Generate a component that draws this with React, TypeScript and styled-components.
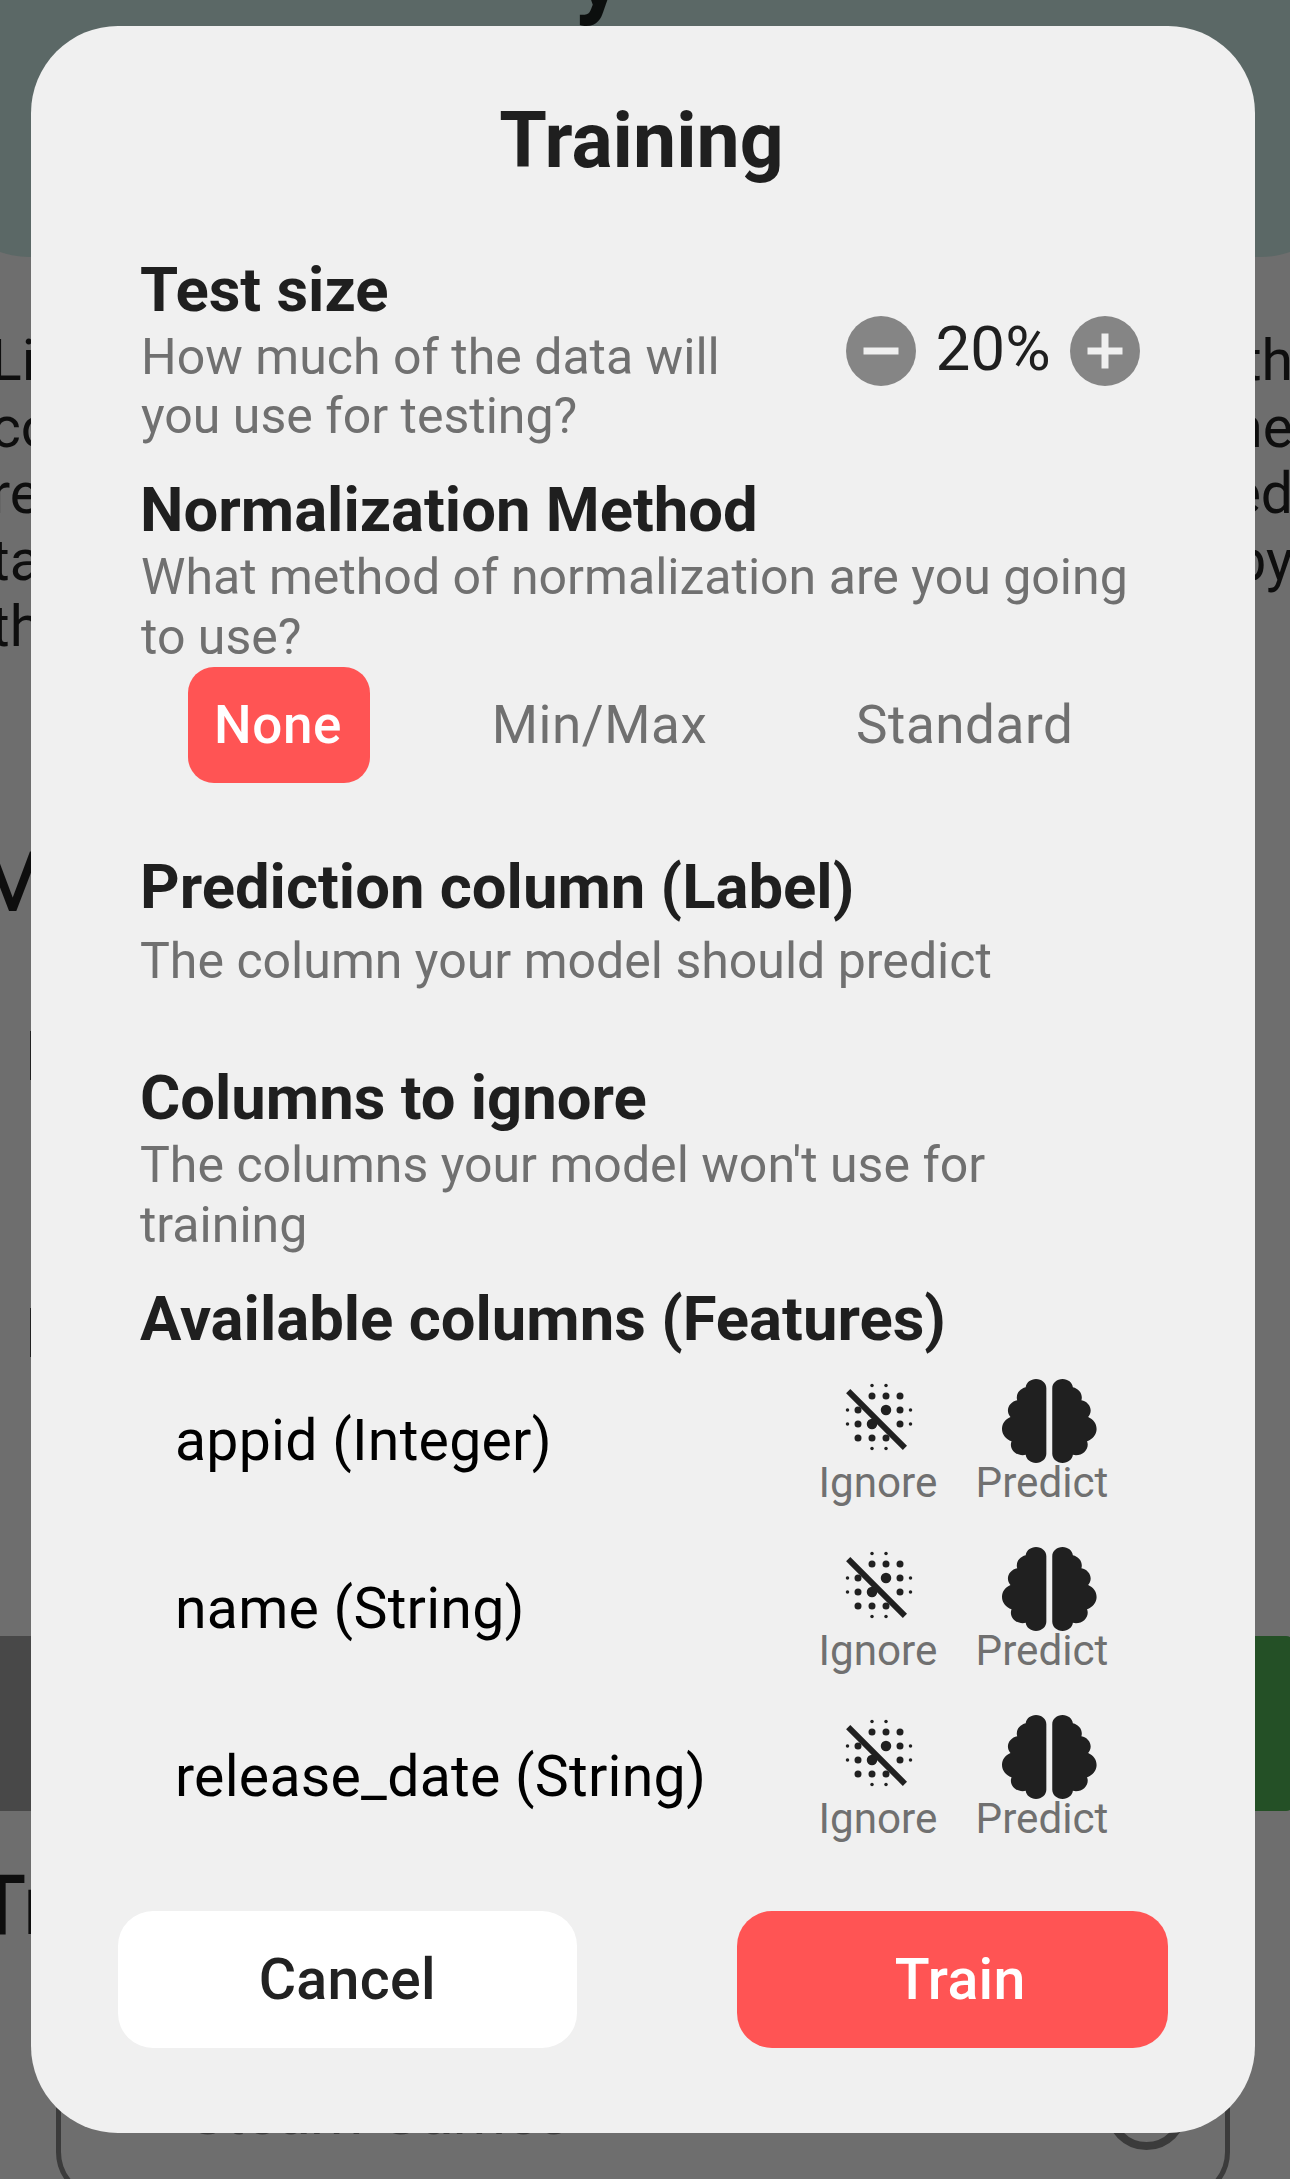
import React from "react";
import styled, { createGlobalStyle } from "styled-components";

const GlobalStyle = createGlobalStyle`
  * { box-sizing: border-box; }
  body { margin: 0; background: #6e6e6e; font-family: Roboto, "Liberation Sans", sans-serif; }
`;

const Screen = styled.main`
  position: relative;
  width: 1290px;
  height: 2179px;
  overflow: hidden;
  background: #6e6e6e;
`;

/* Dimmed page behind the dialog */
const Backdrop = styled.div`
  display: flex;
  flex-direction: column;
  height: 100%;
  overflow: hidden;
  color: #0e0e0e;
`;

const Banner = styled.header`
  flex: none;
  height: 257px;
  margin: 0 -58px;
  border-radius: 0 0 87px 87px;
  background: #5b6866;
  overflow: hidden;
`;

const BannerTitle = styled.div`
  margin: -87px 0 0 632px;
  font-size: 100px;
  line-height: 115px;
  font-weight: 700;
  color: #0c0f0e;
`;

const Intro = styled.div`
  flex: none;
  margin: 71.3px 0 0 -9px;
  width: 1302px;
`;

const IntroLine = styled.div`
  display: flex;
  justify-content: space-between;
  height: 66.5px;
  font-size: 57px;
  line-height: 66.5px;
`;

const SideHeading = styled.div<{ $top: number; $left: number }>`
  flex: none;
  height: 98px;
  margin: ${(p) => p.$top}px 0 0 ${(p) => p.$left}px;
  font-size: 84px;
  line-height: 98px;
  font-weight: 500;
`;

const Stem = styled.div<{ $top: number }>`
  flex: none;
  width: 4px;
  height: 49px;
  margin: ${(p) => p.$top}px 0 0 30px;
  background: #222;
`;

const Strip = styled.div`
  flex: none;
  display: flex;
  justify-content: space-between;
  height: 175px;
  margin: 279px -5px 0 0;
`;

const StripEnd = styled.div<{ $color: string }>`
  width: 400px;
  border-radius: 0 9px 9px 0;
  background: ${(p) => p.$color};
`;

const Field = styled.div`
  flex: none;
  display: flex;
  justify-content: space-between;
  width: 1174px;
  height: 180px;
  margin: 65.4px 0 0 56px;
  padding: 52px 38px 0 128px;
  border: 5px solid #3b3b3b;
  border-radius: 48px;
  color: #3b3b3b;
  font-size: 60.7px;
  line-height: 74px;
`;

const Ring = styled.div`
  width: 81px;
  height: 81px;
  border: 8px solid #3b3b3b;
  border-radius: 50%;
  margin-top: -8px;
`;

/* Dialog */
const Dialog = styled.section`
  position: absolute;
  top: 26px;
  left: 31px;
  display: flex;
  flex-direction: column;
  width: 1224px;
  height: 2107.3px;
  padding: 69px 87px 0 87px;
  border-radius: 87px;
  background: #f0f0f0;
  color: #1f1f1f;
`;

const Title = styled.h1`
  margin: 0 3px 66px 0;
  font-size: 77px;
  line-height: 92px;
  font-weight: 700;
  text-align: center;
`;

const Section = styled.div<{ $gap: number }>`
  flex: none;
  margin: 0 0 ${(p) => p.$gap}px 22px;
`;

const SplitSection = styled(Section)`
  display: flex;
  align-items: flex-start;
`;

const SectionText = styled.div`
  width: 699px;
`;

const Heading = styled.h2`
  margin: 0;
  font-size: 61.6px;
  line-height: 74px;
  font-weight: 700;
  white-space: nowrap;
`;

const Description = styled.p<{ $top?: number; $inset?: number }>`
  margin: ${(p) => p.$top ?? 1}px 0 -1px ${(p) => p.$inset ?? 0}px;
  font-size: 50.05px;
  line-height: 59.6px;
  color: #707070;
  white-space: nowrap;
`;

const Stepper = styled.div`
  display: flex;
  align-items: center;
  margin-top: 56px;
  height: 84px;
`;

const StepButton = styled.button`
  display: flex;
  width: 84px;
  height: 84px;
  padding: 0;
  border: 0;
  background: none;
  color: #858585;
`;

const StepValue = styled.span`
  width: 140px;
  padding-bottom: 4px;
  text-align: center;
  font-size: 62px;
  line-height: 74px;
`;

const Options = styled.div`
  flex: none;
  display: flex;
  margin: 1px 0 67px 70px;
`;

const Option = styled.button<{ $active?: boolean; $width: number; $left: number }>`
  width: ${(p) => p.$width}px;
  height: 115.4px;
  margin: 0 0 0 ${(p) => p.$left}px;
  padding: 0 ${(p) => (p.$active ? 2 : 0)}px 0 0;
  border: 0;
  border-radius: 26px;
  background: ${(p) => (p.$active ? "#ff5454" : "transparent")};
  color: ${(p) => (p.$active ? "#fff" : "#707070")};
  font-family: inherit;
  font-size: 53px;
  line-height: 62px;
  letter-spacing: 0.55px;
  font-weight: ${(p) => (p.$active ? 500 : 400)};
  white-space: nowrap;
`;

const FeatureRow = styled.div`
  flex: none;
  display: flex;
  align-items: center;
  height: 168px;
  padding-left: 57px;
`;

const FeatureName = styled.span`
  width: 634px;
  font-size: 57.2px;
  line-height: 66px;
  letter-spacing: 0.25px;
  color: #000;
  white-space: nowrap;
`;

const Action = styled.button<{ $width: number }>`
  display: flex;
  flex-direction: column;
  align-items: center;
  width: ${(p) => p.$width}px;
  padding: 0;
  border: 0;
  background: none;
  color: #202020;
  font-family: inherit;
`;

const ActionLabel = styled.span`
  font-size: 42.2px;
  line-height: 49px;
  color: #707070;
`;

const BlurOffSvg = styled.svg`
  display: block;
  width: 84px;
  height: 84px;
  margin: 1px 0 -1px 2px;
`;

const BrainSvg = styled.svg`
  display: block;
  width: 94.6px;
  height: 84px;
  margin: 5px 0 -5px 15px;
`;

const Footer = styled.div`
  flex: none;
  display: flex;
  justify-content: space-between;
  margin-top: 50.6px;
`;

const FooterButton = styled.button<{ $primary?: boolean }>`
  width: ${(p) => (p.$primary ? 430.7 : 458.5)}px;
  height: 136.8px;
  padding: 0 0 0 ${(p) => (p.$primary ? 15 : 0)}px;
  border: 0;
  border-radius: 35px;
  background: ${(p) => (p.$primary ? "#ff5454" : "#fff")};
  color: ${(p) => (p.$primary ? "#fff" : "#222")};
  font-family: inherit;
  font-size: 57.3px;
  line-height: 66px;
  letter-spacing: 0.3px;
  font-weight: 500;
`;

const StepIcon = ({ plus }: { plus?: boolean }) => (
  <svg width="84" height="84" viewBox="0 0 24 24">
    <circle cx="12" cy="12" r="10" fill="currentColor" />
    <path d={plus ? "M7 11h4V7h2v4h4v2h-4v4h-2v-4H7z" : "M7 11h10v2H7z"} fill="#f0f0f0" />
  </svg>
);

const DOTS: [number, number, number][] = [
  [10, 3, 0.5], [14, 3, 0.5],
  [10, 6, 1], [14, 6, 1], [18, 6, 1],
  [3, 10, 0.5], [6, 10, 1], [14, 10, 1.5], [18, 10, 1], [21, 10, 0.5],
  [3, 14, 0.5], [6, 14, 1], [10, 14, 1.5], [18, 14, 1], [21, 14, 0.5],
  [6, 18, 1], [10, 18, 1], [14, 18, 1],
  [10, 21, 0.5], [14, 21, 0.5],
];

const BlurOffIcon = () => (
  <BlurOffSvg viewBox="0 0 24 24" fill="currentColor">
    {DOTS.map(([x, y, r]) => (
      <circle key={`${x}-${y}`} cx={x} cy={y} r={r} />
    ))}
    <path d="M3.8 4 2.6 5.2 18.8 21.4 20 20.2z" />
  </BlurOffSvg>
);

const BrainIcon = () => (
  <BrainSvg viewBox="0 0 512 512" preserveAspectRatio="none" fill="currentColor">
    <path d="M184 0c30.900 0 56 25.100 56 56V456c0 30.900-25.100 56-56 56c-28.900 0-52.700-21.900-55.700-50.100c-5.200 1.400-10.700 2.100-16.300 2.100c-35.300 0-64-28.700-64-64c0-7.400 1.300-14.600 3.600-21.200C21.400 367.400 0 338.200 0 304c0-31.900 18.700-59.500 45.800-72.300C37.100 220.800 32 207 32 192c0-30.700 21.600-56.300 50.400-62.600C80.800 123.900 80 118 80 112c0-29.900 20.600-55.100 48.300-62.100C131.300 21.900 155.100 0 184 0zM328 0c28.900 0 52.600 21.900 55.700 49.900c27.800 7 48.300 32.100 48.300 62.100c0 6-.8 11.900-2.400 17.400c28.800 6.200 50.400 31.900 50.400 62.600c0 15-5.100 28.800-13.800 39.700C493.300 244.500 512 272.100 512 304c0 34.200-21.400 63.400-51.600 74.800c2.300 6.600 3.600 13.800 3.600 21.200c0 35.300-28.700 64-64 64c-5.600 0-11.100-.7-16.300-2.100c-3 28.200-26.800 50.100-55.700 50.100c-30.900 0-56-25.100-56-56V56c0-30.900 25.100-56 56-56z" />
  </BrainSvg>
);

const INTRO = [["Li", "th"], ["co", "ne"], ["re", "ed"], ["ta", "by"], ["th", ""]];
const FEATURES = ["appid (Integer)", "name (String)", "release_date (String)"];

export default function App() {
  return (
    <Screen>
      <GlobalStyle />
      <Backdrop>
        <Banner>
          <BannerTitle>y</BannerTitle>
        </Banner>
        <Intro>
          {INTRO.map(([start, end]) => (
            <IntroLine key={start}>
              <span>{start}</span>
              <span>{end}</span>
            </IntroLine>
          ))}
        </Intro>
        <SideHeading $top={173.5} $left={-24}>M</SideHeading>
        <Stem $top={98.7} />
        <Stem $top={228} />
        <Strip>
          <StripEnd $color="#484848" />
          <StripEnd $color="#245026" />
        </Strip>
        <SideHeading $top={45.6} $left={-25}>Tr</SideHeading>
        <Field>
          Steam Games
          <Ring />
        </Field>
      </Backdrop>

      <Dialog>
        <Title>Training</Title>
        <SplitSection $gap={27.5}>
          <SectionText>
            <Heading>Test size</Heading>
            <Description $top={0.5} $inset={1}>
              How much of the data will
              <br />
              you use for testing?
            </Description>
          </SectionText>
          <Stepper>
            <StepButton><StepIcon /></StepButton>
            <StepValue>20%</StepValue>
            <StepButton><StepIcon plus /></StepButton>
          </Stepper>
        </SplitSection>
        <Section $gap={0}>
          <Heading>Normalization Method</Heading>
          <Description $inset={1}>
            What method of normalization are you going
            <br />
            to use?
          </Description>
        </Section>
        <Options>
          <Option $active $width={182} $left={0}>None</Option>
          <Option $width={270} $left={94.5}>Min/Max</Option>
          <Option $width={270} $left={95.2}>Standard</Option>
        </Options>
        <Section $gap={71}>
          <Heading>Prediction column (Label)</Heading>
          <Description $top={8}>The column your model should predict</Description>
        </Section>
        <Section $gap={27.4}>
          <Heading>Columns to ignore</Heading>
          <Description>
            The columns your model won't use for
            <br />
            training
          </Description>
        </Section>
        <Section $gap={0.6}>
          <Heading>Available columns (Features)</Heading>
        </Section>
        {FEATURES.map((name) => (
          <FeatureRow key={name}>
            <FeatureName>{name}</FeatureName>
            <Action $width={138}>
              <BlurOffIcon />
              <ActionLabel>Ignore</ActionLabel>
            </Action>
            <Action $width={190}>
              <BrainIcon />
              <ActionLabel>Predict</ActionLabel>
            </Action>
          </FeatureRow>
        ))}
        <Footer>
          <FooterButton>Cancel</FooterButton>
          <FooterButton $primary>Train</FooterButton>
        </Footer>
      </Dialog>
    </Screen>
  );
}
